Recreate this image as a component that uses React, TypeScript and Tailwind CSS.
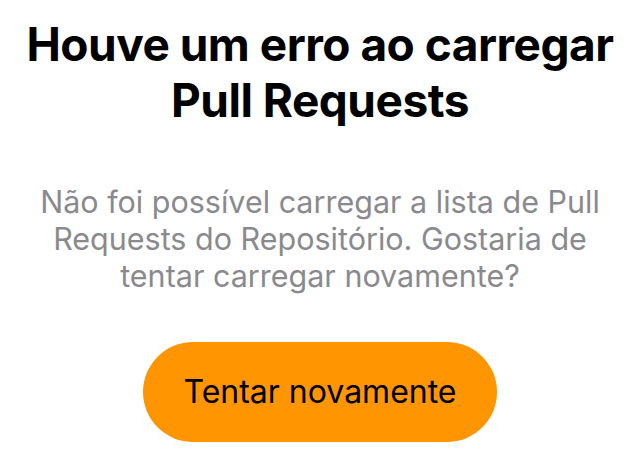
export default function App() {
  return (
    <div className="flex min-h-[459px] w-[640px] flex-col items-center bg-white pt-[16px] font-['Inter',sans-serif]">
      <h1 className="text-center text-[46px] font-bold leading-[56px] tracking-[-0.5px] text-black">
        Houve um erro ao carregar
        <br />
        Pull Requests
      </h1>
      <p className="mt-[55px] px-9 text-center text-[30.5px] leading-[37px] text-[#8a8a8e]">
        Não foi possível carregar a lista de Pull Requests do Repositório. Gostaria de tentar carregar novamente?
      </p>
      <button className="mt-[48px] flex h-[100px] w-[354px] items-center justify-center rounded-full bg-[#ff9500] text-[32px] text-black">
        Tentar novamente
      </button>
    </div>
  )
}
